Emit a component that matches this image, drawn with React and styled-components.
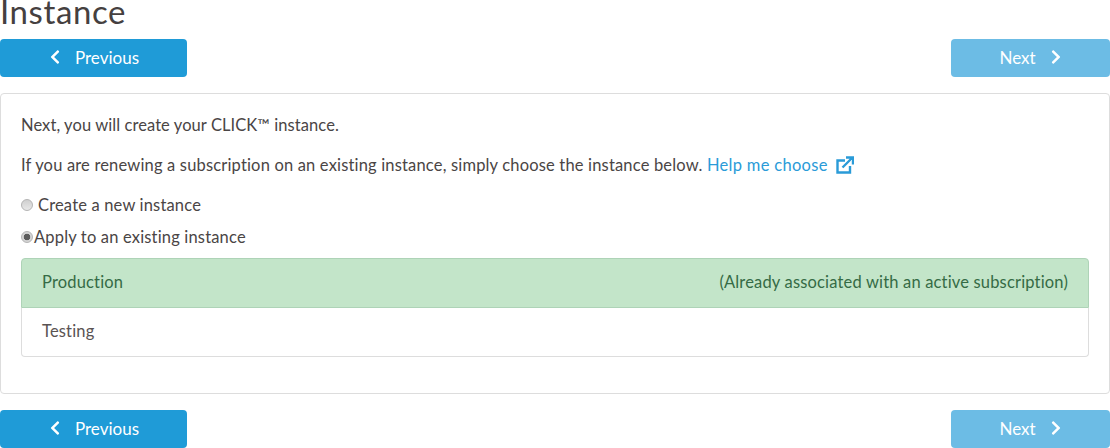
import React from 'react';
import styled, { createGlobalStyle } from 'styled-components';
import { FaChevronLeft, FaChevronRight } from 'react-icons/fa';

const GlobalStyle = createGlobalStyle`
  html, body {
    margin: 0;
    padding: 0;
    background: #fff;
    overflow: hidden;
  }
  body {
    font-family: 'Lato', 'Open Sans', sans-serif;
    font-size: 16.5px;
    letter-spacing: 0.17px;
    color: #4a4545;
  }
`;

const Page = styled.div`
  width: 1110px;
  height: 448px;
  overflow: hidden;
`;

const Title = styled.h1`
  margin: -10px 0 0;
  height: 49px;
  font-size: 33px;
  font-weight: 400;
  letter-spacing: 0.6px;
  line-height: 42px;
  color: #454040;
`;

const Toolbar = styled.div`
  display: flex;
  justify-content: space-between;
`;

const NavButton = styled.button`
  width: ${(p) => (p.$faded ? '159px' : '187px')};
  height: 38px;
  border: 0;
  border-radius: 4px;
  padding: 0 ${(p) => (p.$faded ? '0' : '1px')} 2px ${(p) => (p.$faded ? '2px' : '0')};
  display: flex;
  align-items: center;
  justify-content: center;
  gap: 12px;
  color: #fff;
  font-family: inherit;
  font-size: 17px;
  letter-spacing: 0;
  background: ${(p) => (p.$faded ? '#6cbce5' : '#1f9bd7')};
`;

const Panel = styled.div`
  margin: 16px 0;
  height: 301px;
  box-sizing: border-box;
  border: 1px solid #ddd;
  border-radius: 4px;
  padding: 19px 20px;
`;

const Para = styled.p`
  margin: 0 0 20px;
  line-height: 24px;
  height: 20px;
  &:first-of-type {
    letter-spacing: 0.08px;
  }
  &:last-of-type {
    margin-bottom: 16px;
  }
`;

const HelpLink = styled.a`
  color: #2a9bd8;
  text-decoration: none;
  letter-spacing: 0.3px;
`;

const LinkIcon = styled.svg`
  width: 18px;
  height: 18px;
  margin-left: 8px;
  vertical-align: -3px;
`;

const RadioRow = styled.label`
  display: flex;
  align-items: center;
  height: 32px;
  gap: ${(p) => (p.$gap ? '5px' : '1px')};
`;

const RadioDot = styled.span`
  width: 12px;
  height: 12px;
  box-sizing: border-box;
  border-radius: 50%;
  border: 1px solid #b4b4b4;
  background: ${(p) => (p.$checked ? 'radial-gradient(circle, #5c5c5c 0 3px, #d4d4d4 3.6px)' : 'linear-gradient(#cfcfcf, #e8e8e8)')};
`;

const List = styled.div`
  margin-top: 5px;
`;

const ListRow = styled.div`
  height: 50px;
  padding: 0 20px 2px;
  box-sizing: border-box;
  display: flex;
  align-items: center;
  justify-content: space-between;
  border: 1px solid ${(p) => (p.$active ? '#aed3b7' : '#ddd')};
  border-radius: 4px 4px 0 0;
  background: ${(p) => (p.$active ? '#c3e5c9' : '#fff')};
  color: ${(p) => (p.$active ? '#356b45' : '#5a5353')};
  & + & {
    height: 49px;
    border-top: 0;
    border-radius: 0 0 4px 4px;
  }
`;

function Nav() {
  return (
    <Toolbar>
      <NavButton>
        <FaChevronLeft size={16} />
        Previous
      </NavButton>
      <NavButton $faded>
        Next
        <FaChevronRight size={16} />
      </NavButton>
    </Toolbar>
  );
}

export default function App() {
  return (
    <Page>
      <GlobalStyle />
      <Title>Instance</Title>
      <Nav />
      <Panel>
        <Para>Next, you will create your CLICK™ instance.</Para>
        <Para>
          If you are renewing a subscription on an existing instance, simply choose the instance below.{' '}
          <HelpLink href="#">
            Help me choose
            <LinkIcon viewBox="0 0 18 18" fill="none" stroke="#2a9bd8" strokeWidth="2.4">
              <path d="M14 10v6.5H1.5V4.5H9" />
              <path d="M6.5 11.5 16 2M10 1.5h7V8.5" />
            </LinkIcon>
          </HelpLink>
        </Para>
        <RadioRow $gap>
          <RadioDot />
          Create a new instance
        </RadioRow>
        <RadioRow>
          <RadioDot $checked />
          Apply to an existing instance
        </RadioRow>
        <List>
          <ListRow $active>
            <span>Production</span>
            <span>(Already associated with an active subscription)</span>
          </ListRow>
          <ListRow>Testing</ListRow>
        </List>
      </Panel>
      <Nav />
    </Page>
  );
}
